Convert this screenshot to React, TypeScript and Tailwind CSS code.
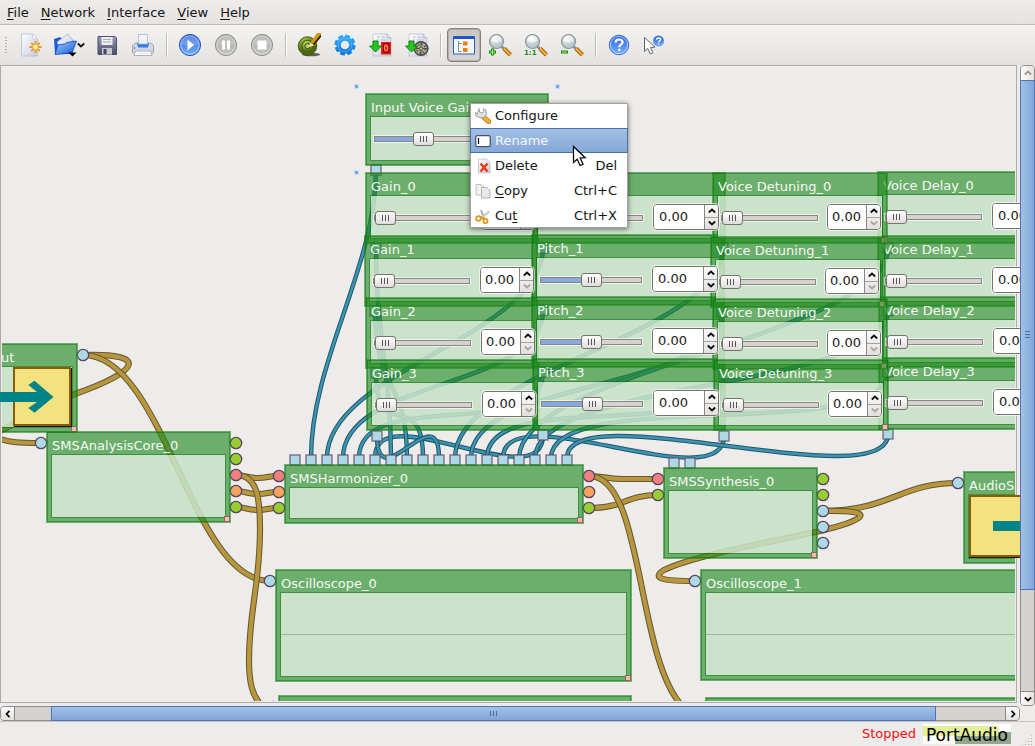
import type { ReactNode } from "react";

type Kind = "gain" | "pitch" | "detune" | "delay" | "input";

interface NodeSpec {
  title: string;
  x: number;
  y: number;
  w: number;
  h: number;
  kind?: Kind;
  grip?: boolean;
  scope?: boolean;
}

const NODES: NodeSpec[] = [
  { title: "Voice Delay_0", x: 877, y: 171, w: 190, h: 73, kind: "delay" },
  { title: "Voice Delay_1", x: 877, y: 235, w: 190, h: 72, kind: "delay" },
  { title: "Voice Delay_2", x: 878, y: 296, w: 190, h: 72, kind: "delay" },
  { title: "Voice Delay_3", x: 878, y: 357, w: 190, h: 73, kind: "delay" },
  { title: "Gain_0", x: 365, y: 172, w: 174, h: 72, kind: "gain" },
  { title: "Gain_1", x: 364, y: 235, w: 174, h: 72, kind: "gain" },
  { title: "Gain_2", x: 365, y: 297, w: 174, h: 72, kind: "gain" },
  { title: "Gain_3", x: 366, y: 359, w: 174, h: 72, kind: "gain" },
  { title: "", x: 532, y: 172, w: 194, h: 72, kind: "pitch" },
  { title: "Pitch_1", x: 531, y: 234, w: 194, h: 72, kind: "pitch" },
  { title: "Pitch_2", x: 531, y: 296, w: 194, h: 72, kind: "pitch" },
  { title: "Pitch_3", x: 532, y: 358, w: 194, h: 73, kind: "pitch" },
  { title: "Voice Detuning_0", x: 712, y: 172, w: 176, h: 72, kind: "detune", grip: true },
  { title: "Voice Detuning_1", x: 710, y: 236, w: 176, h: 72, kind: "detune", grip: true },
  { title: "Voice Detuning_2", x: 712, y: 298, w: 176, h: 72, kind: "detune", grip: true },
  { title: "Voice Detuning_3", x: 713, y: 359, w: 176, h: 72, kind: "detune", grip: true },
  { title: "Input Voice Gain", x: 365, y: 93, w: 184, h: 73, kind: "input" },
  { title: "ut", x: -5, y: 343, w: 83, h: 90, grip: true },
  { title: "SMSAnalysisCore_0", x: 46, y: 431, w: 185, h: 92, grip: true },
  { title: "SMSHarmonizer_0", x: 284, y: 464, w: 300, h: 60, grip: true },
  { title: "SMSSynthesis_0", x: 663, y: 467, w: 155, h: 92, grip: true },
  { title: "AudioS", x: 963, y: 471, w: 120, h: 93 },
  { title: "Oscilloscope_0", x: 275, y: 569, w: 357, h: 113, grip: true, scope: true },
  { title: "Oscilloscope_1", x: 700, y: 569, w: 357, h: 112, grip: true, scope: true },
  { title: "", x: 278, y: 695, w: 354, h: 90 },
  { title: "", x: 705, y: 697, w: 357, h: 90 },
];

const WIDGETS: Record<Kind, { sx: number; sw: number; value: number; bx?: number; bw?: number; both?: boolean }> = {
  gain: { sx: 9, sw: 97, value: 0, bx: 116, bw: 54 },
  pitch: { sx: 9, sw: 102, value: 50, bx: 121, bw: 66, both: true },
  detune: { sx: 9, sw: 97, value: 0, bx: 115, bw: 54 },
  delay: { sx: 8, sw: 97, value: 0, bx: 115, bw: 66, both: true },
  input: { sx: 9, sw: 117, value: 40 },
};

const STREAMS = [
  "M83 355C150 353 140 371 75 394C40 406 20 422 0 431",
  "M-6 437C10 443 20 443 41 443",
  "M83 355C165 355 190 581 270 581",
  "M236 475C246 475 247 478 258 478S266 476 279 476",
  "M236 491C246 491 247 494 258 494S266 492 279 492",
  "M236 507C246 507 247 510 258 510S266 508 279 508",
  "M236 475C258 475 260 500 260 530C260 585 249 610 249 660C249 685 253 695 260 704",
  "M589 476C606 476 606 479 622 479H658",
  "M589 508C625 508 625 495 658 495",
  "M589 476C645 476 635 660 684 708",
  "M823 511C890 511 900 483 958 483",
  "M823 511C878 510 866 519 828 529C780 541 700 553 664 570C650 579 665 581 695 581",
];

/** Control wires leave a node downwards and enter the target from above. */
function wire(sx: number, sy: number, tx: number): string {
  const ty = 458;
  const d = 62 + (ty - sy) * 0.12;
  return `M${sx} ${sy}C${sx} ${sy + d} ${tx} ${ty - d} ${tx} ${ty}`;
}

const SOURCES: [number, number][] = [
  [543, 248], [543, 310], [543, 372], [543, 435],
  [376, 248], [375, 311], [376, 373], [377, 436],
  [723, 248], [722, 312], [724, 374], [724, 436],
  [888, 248], [888, 311], [888, 372], [888, 434],
];
const CONTROLS = [wire(376, 170, 311), ...SOURCES.map(([x, y], i) => wire(x, y, 327 + 16 * i))];

const SQUARES: [number, number][] = [
  ...Array.from({ length: 18 }, (_, i): [number, number] => [295 + 16 * i, 460]),
  ...SOURCES,
  [376, 170], [674, 463], [690, 463],
];

const BLUE = "#add8e6";
const LIME = "#9acd32";
const CORAL = "#f08080";
const SAND = "#f4a460";
const CIRCLES: [number, number, string][] = [
  [83, 355, BLUE], [41, 443, BLUE],
  [236, 443, LIME], [236, 459, LIME], [236, 475, CORAL], [236, 491, SAND], [236, 507, LIME],
  [279, 476, CORAL], [279, 492, SAND], [279, 508, LIME],
  [589, 476, CORAL], [589, 492, SAND], [589, 508, LIME],
  [658, 479, CORAL], [658, 495, LIME],
  [823, 479, LIME], [823, 495, LIME], [823, 511, BLUE], [823, 527, BLUE], [823, 543, BLUE],
  [958, 483, BLUE], [270, 581, BLUE], [695, 581, BLUE], [273, 707, CORAL],
];

function Wires() {
  return (
    <svg className="absolute top-0 left-0 overflow-visible" width="1035" height="746" fill="none" aria-hidden="true">
      {CONTROLS.map((d) => (
        <g key={d}>
          <path d={d} stroke="#1d5a66" strokeWidth="4.4" />
          <path d={d} stroke="#3f92b4" strokeWidth="2.4" />
        </g>
      ))}
      {STREAMS.map((d) => (
        <g key={d}>
          <path d={d} stroke="#635a2c" strokeWidth="6.2" />
          <path d={d} stroke="#b8953f" strokeWidth="4.2" />
        </g>
      ))}
      {SQUARES.map(([x, y], i) => (
        <rect key={i} x={x - 5} y={y - 5} width="10" height="10" fill={BLUE} stroke="#5e4a66" strokeOpacity="0.75" strokeWidth="1.4" />
      ))}
      {CIRCLES.map(([x, y, fill], i) => (
        <circle key={i} cx={x} cy={y} r="5.7" fill={fill} stroke="#5a4460" strokeWidth="1.3" />
      ))}
      {[[356, 86], [557, 86], [356, 172]].map(([x, y]) => (
        <rect key={`${x}-${y}`} x={x - 1.5} y={y - 1.5} width="4" height="4" fill="#7da7dd" stroke="#cfdff2" />
      ))}
    </svg>
  );
}

function GraphNode({ node }: { node: NodeSpec }) {
  return (
    <section
      className="absolute flex flex-col border border-transparent bg-[rgba(34,139,34,0.64)] px-1 pb-1 shadow-[inset_0_0_0_1px_rgba(0,100,0,0.42)]"
      style={{ left: node.x, top: node.y, width: node.w, height: node.h }}
    >
      <h2 className="h-[22px] shrink-0 pt-1 pl-px text-[13px] leading-5 whitespace-nowrap text-[#f4faf4]">{node.title}</h2>
      <div className="flex flex-1 flex-col justify-center border border-[rgba(0,100,0,0.42)] bg-white/65 bg-clip-padding">
        {node.scope && <div className="h-px bg-[#9fb59f]" />}
      </div>
      {node.grip && <span className="absolute right-0 bottom-0 size-[6px] border border-[#8a6a5a] bg-[#ffb6b6]" />}
    </section>
  );
}

function Slider({ label, value }: { label: string; value: number }) {
  return (
    <input
      type="range"
      aria-label={label}
      defaultValue={value}
      className="h-[15px] w-full appearance-none bg-transparent [&::-webkit-slider-runnable-track]:h-[6px] [&::-webkit-slider-runnable-track]:border [&::-webkit-slider-runnable-track]:border-[#8b8682] [&::-webkit-slider-runnable-track]:bg-[linear-gradient(to_right,#86aadd_var(--fill),#d6d2d0_var(--fill))] [&::-webkit-slider-runnable-track]:shadow-[0_0_0_1px_rgba(255,255,255,0.6)] [&::-webkit-slider-thumb]:-mt-[5px] [&::-webkit-slider-thumb]:h-[14px] [&::-webkit-slider-thumb]:w-[21px] [&::-webkit-slider-thumb]:appearance-none [&::-webkit-slider-thumb]:rounded-[3px] [&::-webkit-slider-thumb]:border [&::-webkit-slider-thumb]:border-[#77726e] [&::-webkit-slider-thumb]:bg-[linear-gradient(#555,#555),linear-gradient(#555,#555),linear-gradient(#555,#555),linear-gradient(#fff,#dedcda)] [&::-webkit-slider-thumb]:bg-[length:1px_6px,1px_6px,1px_6px,100%_100%] [&::-webkit-slider-thumb]:bg-[position:6px_3px,9px_3px,12px_3px,0_0] [&::-webkit-slider-thumb]:bg-no-repeat"
      style={{ ["--fill" as string]: `${value}%` }}
    />
  );
}

function Chevron({ d, color = "#111" }: { d: string; color?: string }) {
  return (
    <svg width="8" height="8" viewBox="0 0 8 8" fill="none" stroke={color} strokeWidth="1.8" aria-hidden="true">
      <path d={d} />
    </svg>
  );
}
const UP = "M0.8 5.5L4 2.5L7.2 5.5";
const DOWN = "M0.8 2.5L4 5.5L7.2 2.5";
const LEFT = "M5.5 0.8L2.5 4L5.5 7.2";
const RIGHT = "M2.5 0.8L5.5 4L2.5 7.2";

function SpinBox({ label, both }: { label: string; both?: boolean }) {
  return (
    <div className="flex h-[26px] w-full overflow-hidden rounded-[4px] border border-[#77726e] bg-white shadow-[0_0_0_1px_rgba(255,255,255,0.6)]">
      <input
        type="text"
        inputMode="decimal"
        aria-label={label}
        defaultValue="0.00"
        className={both ? "w-0 min-w-0 flex-1 bg-white pl-[5px] text-[13px] text-[#1a1a1a]" : "w-0 min-w-0 flex-1 bg-white pl-[4px] text-[13px] text-[#1a1a1a]"}
      />
      <div className="flex w-[14px] flex-col border-l border-[#8b8682] bg-linear-to-b from-[#fbfbfb] to-[#e2e0de]">
        <button type="button" aria-label={`Increase ${label}`} className="flex flex-1 items-center justify-center border-b border-[#a5a19e]">
          <Chevron d={UP} />
        </button>
        <button type="button" aria-label={`Decrease ${label}`} className="flex flex-1 items-center justify-center">
          <Chevron d={DOWN} color={both ? "#111" : "#aaa7a4"} />
        </button>
      </div>
    </div>
  );
}

function NodeWidgets({ node }: { node: NodeSpec }) {
  if (!node.kind) return null;
  const w = WIDGETS[node.kind];
  return (
    <>
      <div className="absolute flex" style={{ left: node.x + w.sx, top: node.y + 38, width: w.sw }}>
        <Slider label={`${node.title} slider`} value={w.value} />
      </div>
      {w.bx !== undefined && (
        <div className="absolute flex" style={{ left: node.x + w.bx, top: node.y + 32, width: w.bw }}>
          <SpinBox label={`${node.title} value`} both={w.both} />
        </div>
      )}
    </>
  );
}

/* ---------- toolbar icons ---------- */

function Icon({ children, size = 24 }: { children: ReactNode; size?: number }) {
  return (
    <svg width={size} height={size} viewBox={`0 0 ${size} ${size}`} fill="none" aria-hidden="true">
      {children}
    </svg>
  );
}

function Gradients() {
  return (
    <svg width="0" height="0" className="absolute" aria-hidden="true">
      <defs>
        <linearGradient id="paper" x2="1" y2="1"><stop stopColor="#fff" /><stop offset="1" stopColor="#c5cbe2" /></linearGradient>
        <linearGradient id="blue" x2="0" y2="1"><stop stopColor="#2a64dc" /><stop offset="1" stopColor="#78b0ff" /></linearGradient>
        <linearGradient id="folder" x2="1" y2="1"><stop stopColor="#a4d2ff" /><stop offset="1" stopColor="#0d55d6" /></linearGradient>
        <linearGradient id="grey" x2="0" y2="1"><stop stopColor="#a5a5a3" /><stop offset="1" stopColor="#c6c6c4" /></linearGradient>
        <linearGradient id="disk" x2="0" y2="1"><stop stopColor="#9a9cb8" /><stop offset="1" stopColor="#4c4e68" /></linearGradient>
        <radialGradient id="lens" cx="0.4" cy="0.3"><stop stopColor="#fff" /><stop offset="1" stopColor="#b9c9cf" /></radialGradient>
        <radialGradient id="green" cx="0.4" cy="0.3"><stop stopColor="#c4dc5a" /><stop offset="1" stopColor="#4c6a10" /></radialGradient>
        <linearGradient id="gearblue" x2="0" y2="1"><stop stopColor="#2aa8fa" /><stop offset="1" stopColor="#1379dc" /></linearGradient>
      </defs>
    </svg>
  );
}

const NewIcon = () => (
  <Icon>
    <path d="M3.500 1h11l5 5v17h-16z" fill="url(#paper)" stroke="#b9bccd" strokeWidth="0.8" />
    <path d="M14.500 1v5h5z" fill="#fff" stroke="#b9bccd" strokeWidth="0.6" />
    <path d="M17.500 8v12M11.500 14h12M13.300 9.800l8.400 8.400M21.700 9.800l-8.400 8.400" stroke="#e8951d" strokeWidth="1.8" />
    <circle cx="17.500" cy="14" r="2.800" fill="#fff3a0" stroke="#f4b32c" />
  </Icon>
);
const OpenIcon = () => (
  <Icon>
    <path d="M1 6l6-2 2 2h9l3 2-2 13H2z" fill="#1c5fd8" />
    <path d="M4 9L15 1l5 6.500L17 14H6z" fill="url(#paper)" stroke="#8a9cc8" strokeWidth="0.6" />
    <path d="M5 12l7-1 2-1.500 9.500-1.500L19 20 2 21.500z" fill="url(#folder)" stroke="#0c48bd" strokeWidth="0.8" />
    <path d="M15.500 19.500h8l-4 4z" fill="#000" />
  </Icon>
);
const SaveIcon = () => (
  <Icon>
    <path d="M3 3.500h17l1.500 1.500v16.500H3z" fill="url(#disk)" stroke="#4d5068" />
    <path d="M6.500 4h11v8h-11z" fill="#eceef4" />
    <path d="M8 6.500h8M8 9h8" stroke="#a8abb8" />
    <path d="M7 15h10v6.500H7z" fill="#c6c9d2" />
    <path d="M8.500 16h3v5h-3z" fill="#44465a" />
  </Icon>
);
const PrintIcon = () => (
  <Icon>
    <path d="M1.500 12.500l3-2.500h15l3 2.500v7l-2 1.500h-17l-2-1.500z" fill="#d5d7dd" stroke="#9397a4" strokeWidth="0.8" />
    <path d="M6 10h12l-1 4.500H7z" fill="#2f7de8" />
    <path d="M7.500 11V1.500h9V11z" fill="#eef2fb" stroke="#a9b3cc" strokeWidth="0.8" />
    <path d="M4.500 18h15l1.500 4.500h-18z" fill="#fff" stroke="#9a9fae" strokeWidth="0.8" />
    <path d="M6.500 20.300h11" stroke="#dfe2ea" />
    <circle cx="3.500" cy="15" r="0.900" fill="#5a8ae0" />
  </Icon>
);
const RoundIcon = ({ blue, children }: { blue?: boolean; children: ReactNode }) => (
  <Icon>
    <circle cx="12" cy="12" r="10.600" fill={blue ? "url(#blue)" : "url(#grey)"} stroke={blue ? "#2a56b8" : "#8f8f8d"} />
    <circle cx="12" cy="12" r="9.200" stroke="#fff" strokeOpacity="0.5" />
    <path d="M3.500 11a8.500 8 0 0 1 17 0q-8.500 3-17 0z" fill="#fff" fillOpacity="0.22" />
    {children}
  </Icon>
);
const PlayIcon = () => <RoundIcon blue><path d="M9.500 6.500l6.500 5.500-6.500 5.500z" fill="#fff" /></RoundIcon>;
const PauseIcon = () => <RoundIcon><path d="M8 7.500h3v9H8zM13 7.500h3v9h-3z" fill="#fff" /></RoundIcon>;
const StopIcon = () => <RoundIcon><path d="M7.500 7.500h9v9h-9z" fill="#fff" /></RoundIcon>;
const DesignIcon = () => (
  <Icon>
    <ellipse cx="14" cy="21.500" rx="9" ry="1.800" fill="#000" fillOpacity="0.6" />
    <circle cx="10.500" cy="13" r="9.300" fill="url(#green)" stroke="#3a520c" strokeWidth="0.8" />
    <circle cx="10.500" cy="13" r="5.800" stroke="#4a6812" strokeWidth="1.300" />
    <circle cx="10.500" cy="13" r="2.600" fill="#b8d060" stroke="#33500c" />
    <path d="M11 14.500l2.500-5 4 2.800z" fill="#f0dca4" />
    <path d="M13.500 9.500L20 0h4v3.500l-6.500 8.800z" fill="#d49a1c" />
    <path d="M16.500 11.500L24 2.500" stroke="#2e2208" strokeWidth="1.800" />
  </Icon>
);
const GearIcon = () => (
  <Icon>
    <circle cx="12" cy="12" r="8.400" stroke="url(#gearblue)" strokeWidth="4.400" strokeDasharray="4.300 2.298" />
    <circle cx="12" cy="12" r="6.500" stroke="url(#gearblue)" strokeWidth="4.400" />
    <circle cx="12" cy="12" r="6.800" stroke="#6cc4ff" strokeWidth="0.9" strokeOpacity="0.7" />
  </Icon>
);
const Download = () => <path d="M4 8h5v5h3.500L6.500 19 0.500 13H4z" fill="#22c81a" stroke="#0b7a0c" strokeWidth="0.9" />;
const Page = () => (
  <>
    <path d="M4 1h14l4 4v18H4z" fill="url(#paper)" stroke="#b4b8c8" strokeWidth="0.7" />
    <path d="M8 4h3M13 4h3M8 7h2M12 7h6M18 1v4h4" stroke="#9aa3b8" strokeDasharray="1.500 1" />
  </>
);
const PdfIcon = () => (
  <Icon>
    <Page />
    <path d="M12 9h10v12.500H12z" fill="#f01c0c" />
    <path d="M14.500 10.500h5.500v9h-5.500z" stroke="#500" strokeWidth="0.8" />
    <ellipse cx="17" cy="15" rx="1.800" ry="2.600" stroke="#ffd8d0" strokeWidth="0.7" />
    <Download />
  </Icon>
);
const ReelIcon = () => (
  <Icon>
    <Page />
    <circle cx="16" cy="15.500" r="6.800" fill="#b4b1a0" stroke="#4a4a44" strokeWidth="1.600" />
    <circle cx="16" cy="15.500" r="4.400" stroke="#66665c" strokeWidth="2.200" strokeDasharray="1.800 1.600" />
    <path d="M16 9v13M9.500 15.500h13" stroke="#3a3a34" strokeWidth="0.8" />
    <circle cx="16" cy="15.500" r="1.600" fill="#e8df6a" stroke="#333" strokeWidth="0.8" />
    <Download />
  </Icon>
);
const TreeIcon = () => (
  <Icon>
    <path d="M1.500 3.500h21v17.500h-21z" fill="#f3f6fd" stroke="#2960c0" />
    <path d="M1.500 3.500h21v2.500h-21z" fill="#1d55c8" />
    <path d="M6.500 8v10.500h3M6.500 10.500h3" stroke="#888" />
    <path d="M11 8.500h4.500v4H11zM11 15h4.500v4H11z" fill="#f07c0a" />
  </Icon>
);
const ZoomIcon = ({ children }: { children: ReactNode }) => (
  <Icon>
    <path d="M13 13l3 3" stroke="#8b8f92" strokeWidth="2.600" />
    <path d="M16 15.500l6.500 6.500" stroke="#a8600c" strokeWidth="4.200" />
    <path d="M16 15.500l6.500 6.500" stroke="#f6b23c" strokeWidth="2" />
    <circle cx="8.500" cy="8.500" r="7" fill="url(#lens)" stroke="#8e9396" strokeWidth="1.200" />
    <path d="M3 8a5.500 5.500 0 0 1 11 0q-5 2.500-11 0z" fill="#fff" fillOpacity="0.5" />
    {children}
  </Icon>
);
const ZoomInIcon = () => (
  <ZoomIcon>
    <path d="M4.500 15.500v7M1 19h7" stroke="#178a10" strokeWidth="3" />
    <path d="M4.500 16.500v5M2 19h5" stroke="#b4f080" strokeWidth="1" />
  </ZoomIcon>
);
const ZoomOneIcon = () => (
  <ZoomIcon>
    <text x="0" y="22" fontSize="7" fontWeight="bold" fill="#178a10" fontFamily="DejaVu Sans, sans-serif">1:1</text>
  </ZoomIcon>
);
const ZoomOutIcon = () => (
  <ZoomIcon>
    <path d="M1 19h7" stroke="#178a10" strokeWidth="3" />
    <path d="M2 19h5" stroke="#b4f080" strokeWidth="1" />
  </ZoomIcon>
);
const HelpIcon = () => (
  <Icon>
    <circle cx="12" cy="12" r="9.800" fill="url(#blue)" stroke="#3f74dc" />
    <circle cx="12" cy="12" r="8.600" stroke="#fff" strokeOpacity="0.7" strokeWidth="0.8" />
    <path d="M8.600 9.500q0-3 3.500-3t3.500 2.700c0 2.300-3.300 2.300-3.300 5M12.300 15.800v2.200" stroke="#fff" strokeWidth="2.200" />
  </Icon>
);
const WhatsThisIcon = () => (
  <Icon>
    <circle cx="15.500" cy="8" r="5.500" fill="url(#blue)" />
    <path d="M13.600 6.800q0-1.800 2-1.800t2 1.500c0 1.300-1.900 1.300-1.900 2.700M15.700 10.200v1.300" stroke="#fff" strokeWidth="1.300" />
    <path d="M1.500 4.500v14l3.300-3 2.500 5.500 2.600-1.200-2.500-5.300 4.600-.4z" fill="#fff" stroke="#555" strokeWidth="0.9" />
  </Icon>
);

function Tool({ label, active, children }: { label: string; active?: boolean; children: ReactNode }) {
  return (
    <button
      type="button"
      title={label}
      aria-label={label}
      aria-pressed={active}
      className={
        active
          ? "mx-px flex h-[34px] w-[34px] items-center justify-center rounded-[4px] border border-[#85817d] bg-linear-to-b from-[#c9c5c2] to-[#d8d4d1] shadow-[inset_0_0_0_1px_#b4afab]"
          : "flex h-[34px] w-9 items-center justify-center"
      }
    >
      {children}
    </button>
  );
}

const Separator = () => <div className="mr-[4px] ml-[5px] h-6 w-[2px] border-r border-l border-l-[#bcbab7] border-r-white" />;

function ToolBar() {
  return (
    <div className="flex h-10 shrink-0 items-center bg-linear-to-b from-[#f4f3f2] to-[#e3e2e0]" role="toolbar" aria-label="Main">
      <div className="mr-1 ml-1 h-[18px] w-1 bg-[radial-gradient(circle,#b3b0ad_0.8px,transparent_1px)] bg-[size:4px_3px]" />
      <Tool label="New"><NewIcon /></Tool>
      <button type="button" aria-label="Open" className="flex h-[34px] w-[41px] items-center justify-center">
        <OpenIcon />
        <Chevron d={DOWN} />
      </button>
      <Tool label="Save"><SaveIcon /></Tool>
      <Tool label="Print"><PrintIcon /></Tool>
      <Separator />
      <Tool label="Play"><PlayIcon /></Tool>
      <Tool label="Pause"><PauseIcon /></Tool>
      <Tool label="Stop"><StopIcon /></Tool>
      <Separator />
      <Tool label="Designer"><DesignIcon /></Tool>
      <Tool label="Settings"><GearIcon /></Tool>
      <Tool label="Export PDF"><PdfIcon /></Tool>
      <Tool label="Export SVG"><ReelIcon /></Tool>
      <Separator />
      <Tool label="Processing tree" active><TreeIcon /></Tool>
      <Tool label="Zoom in"><ZoomInIcon /></Tool>
      <Tool label="Normal size"><ZoomOneIcon /></Tool>
      <Tool label="Zoom out"><ZoomOutIcon /></Tool>
      <Separator />
      <Tool label="Help"><HelpIcon /></Tool>
      <Tool label="What is this?"><WhatsThisIcon /></Tool>
    </div>
  );
}

const MENUS = ["File", "Network", "Interface", "View", "Help"];

function MenuBar() {
  return (
    <nav className="flex h-[25px] shrink-0 items-center gap-3 border-b border-[#bdbbb9] bg-linear-to-b from-[#edeceb] to-[#e4e3e2] pt-[2px] pl-[7px]">
      {MENUS.map((name) => (
        <button key={name} type="button" className="leading-5">
          <span className="underline underline-offset-2">{name[0]}</span>
          {name.slice(1)}
        </button>
      ))}
    </nav>
  );
}

/* ---------- context menu ---------- */

const WrenchIcon = () => (
  <Icon size={16}>
    <path d="M8.500 9l5 4.500" stroke="#b8720c" strokeWidth="5" strokeLinecap="round" />
    <path d="M8.500 9l5 4.500" stroke="#fbb033" strokeWidth="3.400" strokeLinecap="round" />
    <path d="M4 0.500L4.500 4l2.500 1 2-1.500L8.500 0.500 11 2l.5 4L9 9.500l-4 .3L1 8 0.300 4.500 2.500 5.800z" fill="#dfe1e4" stroke="#8d9196" strokeWidth="0.8" />
  </Icon>
);
const RenameIcon = () => (
  <Icon size={16}>
    <rect x="0.700" y="2.700" width="14.600" height="11" rx="1.800" fill="#fff" stroke="#4a5568" strokeWidth="1.300" />
    <path d="M3.500 5v6" stroke="#000" strokeWidth="1.200" />
  </Icon>
);
const DeleteIcon = () => (
  <Icon size={16}>
    <path d="M3.500 1h8l3.500 3.500V15H3.500z" fill="url(#paper)" stroke="#b4b8cc" strokeWidth="0.7" />
    <path d="M5.500 5.500l7 8M12.500 5.500l-7 8" stroke="#e8380c" strokeWidth="2.400" />
  </Icon>
);
const CopyIcon = () => (
  <Icon size={16}>
    <path d="M1 1.500h5L9 4v8H1z" fill="#f1f1f1" stroke="#b5b5b5" strokeWidth="0.8" />
    <path d="M6.500 4.500h5L15 7.500V15H6.500z" fill="#e9e9e9" stroke="#a5a5a5" strokeWidth="0.8" />
  </Icon>
);
const CutIcon = () => (
  <Icon size={16}>
    <path d="M6 2l3 8" stroke="#a9adb2" strokeWidth="2" />
    <path d="M14.500 3.500L6 9.500" stroke="#c3c6ca" strokeWidth="2" />
    <circle cx="3.500" cy="10.500" r="2.300" stroke="#dc9a1a" strokeWidth="1.800" />
    <circle cx="10.500" cy="13" r="2.100" stroke="#dc9a1a" strokeWidth="1.800" />
    <path d="M5.500 9.500l4 1.500" stroke="#dc9a1a" strokeWidth="2" />
  </Icon>
);

const ACTIONS: { label: string; mnemonic?: number; keys?: string; icon: ReactNode; active?: boolean }[] = [
  { label: "Configure", icon: <WrenchIcon /> },
  { label: "Rename", icon: <RenameIcon />, active: true },
  { label: "Delete", keys: "Del", icon: <DeleteIcon /> },
  { label: "Copy", mnemonic: 0, keys: "Ctrl+C", icon: <CopyIcon /> },
  { label: "Cut", mnemonic: 2, keys: "Ctrl+X", icon: <CutIcon /> },
];

function ContextMenu() {
  return (
    <div role="menu" className="absolute top-[103px] left-[470px] flex w-[158px] flex-col bg-white shadow-[0_1px_5px_rgba(0,0,0,0.55)] outline -outline-offset-1 outline-[#a3a19f]">
      {ACTIONS.map(({ label, mnemonic = -1, keys, icon, active }) => (
        <button
          key={label}
          type="button"
          role="menuitem"
          className={
            active
              ? "relative flex h-[25px] items-center gap-1 border border-[#4b72a8] bg-linear-to-b from-[#a2bfe6] to-[#86a8d8] pr-[10px] pl-[4px] text-[#f3f7fc]"
              : "flex h-[25px] items-center gap-1 pr-[11px] pl-[5px]"
          }
        >
          {icon}
          <span className="flex-1 text-left">
            {label.slice(0, Math.max(mnemonic, 0))}
            {mnemonic >= 0 && <span className="underline underline-offset-2">{label[mnemonic]}</span>}
            {label.slice(mnemonic + 1)}
          </span>
          <span>{keys}</span>
        </button>
      ))}
    </div>
  );
}

/* ---------- canvas ---------- */

function AudioArt() {
  return (
    <>
      <div className="absolute top-[367px] left-[13px] h-[59px] w-[58px] border-2 border-[#8b5a0a] bg-[#f4e27e] shadow-[1px_1px_0_#1a1a1a]" />
      <svg className="absolute top-[380px] left-0" width="56" height="34" aria-hidden="true">
        <path d="M0 12H37L28.300 5L34.500 0.800L53.500 17L34.500 32.800L28.300 28L37 22H0z" fill="#008488" />
      </svg>
      <div className="absolute top-[495px] left-[969px] flex h-[62px] w-[60px] items-center border-2 border-[#8b5a0a] bg-[#f4e27e] pl-[22px] shadow-[0_1px_0_#1a1a1a]">
        <div className="h-[10px] w-full bg-[#008488]" />
      </div>
    </>
  );
}

function Canvas() {
  return (
    <main className="relative min-w-0 flex-1 overflow-hidden">
      <div className="absolute top-0 right-[3px] bottom-[3px] left-0 border border-[#aeacaa]" />
      <div className="absolute top-[2px] right-[5px] bottom-[5px] left-[2px] overflow-hidden">
        <div className="absolute -top-[67px] -left-[2px]">
          <Wires />
          {NODES.map((node, i) => (
            <GraphNode key={i} node={node} />
          ))}
        </div>
      </div>
      <div className="absolute -top-[65px] left-0">
        {NODES.map((node, i) => (
          <NodeWidgets key={i} node={node} />
        ))}
        <AudioArt />
        <ContextMenu />
        <svg className="absolute top-[145px] left-[572px]" width="16" height="24" aria-hidden="true">
          <path d="M1.500 1.500v16l3.700-3.300 2.800 6.300 3-1.300-2.800-6.200 5-.3z" fill="#fff" stroke="#000" strokeWidth="1.200" />
        </svg>
      </div>
    </main>
  );
}

function VerticalScroll() {
  return (
    <div className="flex w-[15px] shrink-0 flex-col rounded-[4px] border border-[#8f8c89] bg-[#d4d2d0]">
      <button type="button" aria-label="Scroll up" className="flex h-[14px] items-center justify-center rounded-t-[3px] bg-linear-to-r from-[#fcfcfc] to-[#e4e2e0]">
        <Chevron d={UP} color="#9a9794" />
      </button>
      <div className="-mx-px flex flex-[510] flex-col items-center justify-center gap-[2px] border border-[#4f76b0] bg-linear-to-r from-[#a3c0e8] to-[#82a5d8]">
        <span className="h-px w-[5px] bg-[#4a6ea6]" />
        <span className="h-px w-[5px] bg-[#4a6ea6]" />
        <span className="h-px w-[5px] bg-[#4a6ea6]" />
      </div>
      <div className="flex-[102]" />
      <button type="button" aria-label="Scroll down" className="flex h-[14px] items-center justify-center rounded-b-[3px] border-t border-[#8b8885] bg-linear-to-r from-[#fcfcfc] to-[#e4e2e0]">
        <Chevron d={DOWN} />
      </button>
    </div>
  );
}

function HorizontalScroll() {
  return (
    <div className="mr-[15px] flex h-[15px] shrink-0 rounded-[4px] border border-[#8f8c89] bg-[#d4d2d0]">
      <button type="button" aria-label="Scroll left" className="flex w-[14px] items-center justify-center rounded-l-[3px] border-r border-[#8b8885] bg-linear-to-b from-[#fcfcfc] to-[#e4e2e0]">
        <Chevron d={LEFT} />
      </button>
      <div className="flex-[36]" />
      <div className="-my-px flex flex-[885] items-center justify-center gap-[2px] border border-[#4f76b0] bg-linear-to-b from-[#a3c0e8] to-[#82a5d8]">
        <span className="h-[5px] w-px bg-[#4a6ea6]" />
        <span className="h-[5px] w-px bg-[#4a6ea6]" />
        <span className="h-[5px] w-px bg-[#4a6ea6]" />
      </div>
      <div className="flex-[69]" />
      <button type="button" aria-label="Scroll right" className="flex w-[14px] items-center justify-center rounded-r-[3px] border-l border-[#8b8885] bg-linear-to-b from-[#fcfcfc] to-[#e4e2e0]">
        <Chevron d={RIGHT} />
      </button>
    </div>
  );
}

function StatusBar() {
  return (
    <footer className="flex h-[25px] shrink-0 items-center justify-end border-t border-[#c6c4c2] pr-[2px]">
      <span className="text-[#fb0d12]">Stopped</span>
      <span className="ml-[7px] h-5 bg-white bg-[linear-gradient(#e3ef9b,#e3ef9b),linear-gradient(#92a98e,#92a98e)] bg-[length:75px_10px,56px_12px] bg-[position:0_2px,right_bottom] bg-no-repeat px-[3px] text-[17px] leading-[22px] text-black">
        PortAudio
      </span>
      <span className="ml-[10px] h-3 w-3 self-end bg-[radial-gradient(circle,#a5a29f_0.8px,transparent_1px)] bg-[size:3px_3px] [clip-path:polygon(100%_0,100%_100%,0_100%)]" />
    </footer>
  );
}

export default function App() {
  return (
    <div className="flex h-screen flex-col overflow-hidden bg-[#edeceb] font-['DejaVu_Sans',sans-serif] text-[13px] text-[#141414]">
      <Gradients />
      <MenuBar />
      <ToolBar />
      <div className="flex min-h-0 flex-1">
        <Canvas />
        <VerticalScroll />
      </div>
      <HorizontalScroll />
      <StatusBar />
    </div>
  );
}
